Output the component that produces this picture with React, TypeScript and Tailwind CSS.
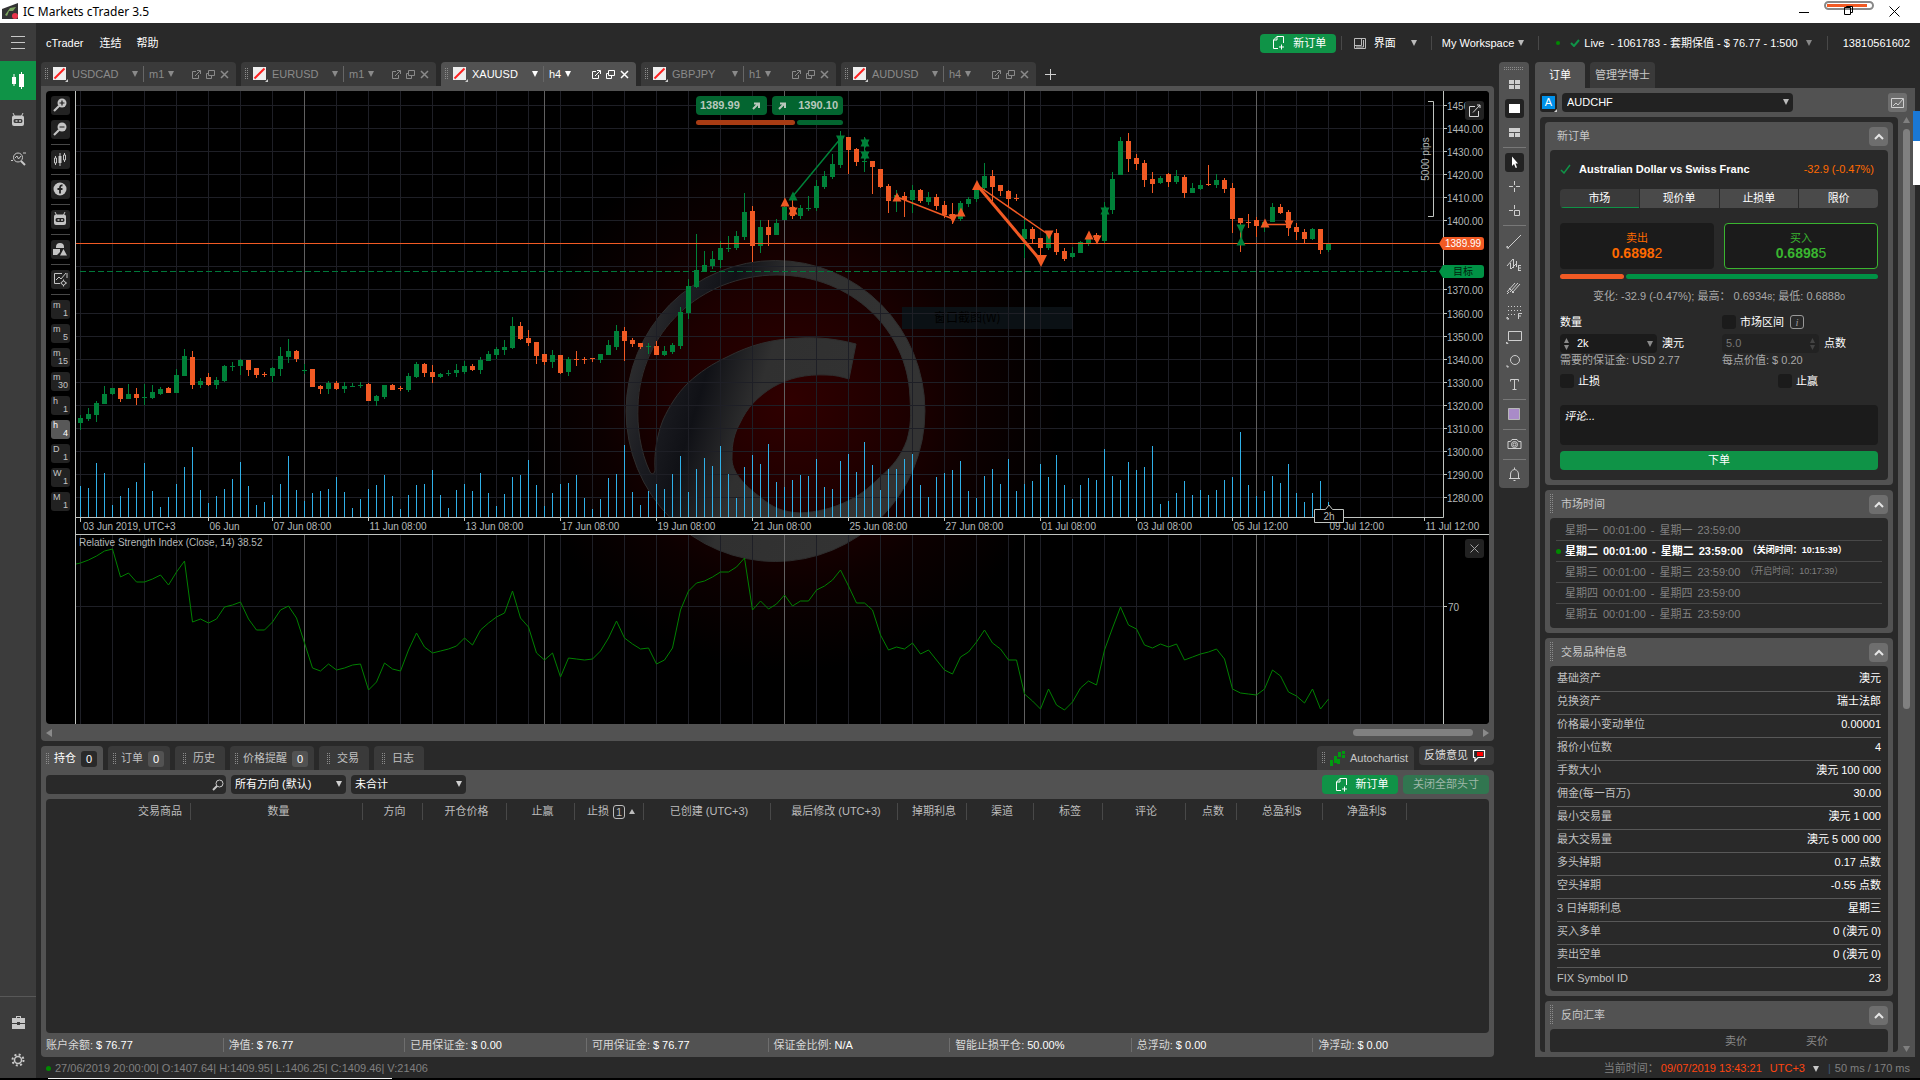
import React, { useState } from 'react';

type Candle = [number, number, number, number, 0 | 1];

// high, body top, body bottom, low, rising
const CANDLES: Candle[] = [
  [324, 327, 332, 339, 1], [317, 323, 328, 330, 1], [310, 312, 324, 331, 1], [295, 303, 313, 313, 1], [297, 297, 303, 304, 1],
  [297, 297, 308, 311, 0], [293, 303, 308, 308, 1], [297, 303, 307, 314, 0], [293, 306, 307, 314, 1], [294, 301, 307, 308, 1],
  [296, 298, 303, 304, 1], [296, 297, 302, 302, 0], [278, 284, 302, 302, 1], [258, 265, 285, 285, 1], [260, 266, 294, 298, 0],
  [287, 290, 294, 297, 1], [282, 286, 294, 295, 0], [286, 289, 294, 298, 1], [274, 275, 290, 291, 1], [271, 275, 276, 280, 1],
  [268, 269, 275, 284, 1], [269, 269, 279, 285, 0], [277, 277, 284, 287, 0], [281, 283, 284, 286, 0], [276, 277, 285, 291, 1],
  [256, 265, 278, 285, 1], [248, 260, 266, 272, 1], [259, 260, 268, 271, 0], [273, 279, 280, 283, 1], [278, 278, 296, 296, 0],
  [294, 295, 298, 303, 0], [290, 292, 298, 303, 1], [290, 292, 298, 299, 0], [291, 295, 298, 302, 1], [292, 295, 296, 296, 1],
  [291, 294, 295, 297, 1], [292, 293, 310, 310, 0], [304, 305, 310, 315, 1], [294, 294, 306, 308, 1], [293, 294, 299, 299, 0],
  [295, 297, 298, 300, 0], [282, 285, 299, 301, 1], [271, 273, 286, 287, 1], [272, 273, 282, 286, 0], [274, 281, 286, 292, 0],
  [282, 283, 286, 287, 1], [279, 282, 283, 285, 1], [273, 279, 282, 286, 1], [270, 275, 281, 283, 1], [273, 275, 279, 280, 0],
  [266, 269, 279, 283, 1], [260, 263, 270, 270, 1], [256, 258, 264, 268, 1], [249, 256, 259, 264, 1], [226, 235, 257, 258, 1],
  [231, 235, 248, 249, 0], [239, 247, 252, 255, 0], [251, 251, 265, 273, 0], [263, 263, 271, 274, 0], [259, 264, 271, 277, 1],
  [264, 264, 282, 283, 0], [266, 268, 281, 285, 1], [260, 268, 269, 275, 0], [266, 268, 269, 273, 0], [267, 267, 268, 271, 0],
  [263, 263, 269, 272, 1], [249, 254, 264, 264, 1], [234, 240, 256, 259, 1], [236, 240, 250, 270, 0], [247, 249, 253, 256, 0],
  [252, 252, 256, 258, 0], [252, 255, 256, 263, 1], [250, 255, 264, 264, 0], [255, 260, 264, 265, 1], [252, 254, 261, 263, 1],
  [216, 221, 255, 258, 1], [188, 195, 222, 228, 1], [143, 179, 196, 197, 1], [160, 174, 181, 181, 1], [160, 168, 175, 178, 1],
  [150, 157, 169, 177, 1], [145, 157, 158, 161, 1], [140, 145, 157, 159, 1], [102, 121, 146, 149, 1], [115, 120, 155, 171, 0],
  [129, 136, 155, 162, 1], [129, 136, 144, 155, 0], [128, 132, 144, 144, 1], [114, 116, 129, 129, 1], [109, 116, 125, 128, 0],
  [114, 117, 125, 128, 1], [105, 117, 118, 120, 1], [89, 95, 117, 120, 1], [80, 85, 96, 98, 1], [63, 73, 86, 88, 1],
  [40, 47, 74, 77, 1], [46, 46, 59, 83, 0], [57, 58, 71, 75, 0], [46, 70, 71, 81, 1], [70, 70, 76, 103, 0],
  [78, 78, 96, 97, 0], [93, 95, 110, 122, 0], [99, 104, 110, 121, 1], [101, 105, 109, 126, 0], [94, 99, 109, 122, 1],
  [98, 99, 110, 112, 0], [101, 106, 111, 114, 1], [103, 106, 115, 119, 0], [110, 114, 124, 127, 0], [112, 123, 125, 133, 0],
  [110, 112, 128, 130, 1], [106, 108, 113, 116, 1], [94, 96, 108, 111, 1], [72, 85, 97, 99, 1], [79, 85, 96, 110, 0],
  [94, 94, 100, 105, 0], [99, 100, 108, 116, 0], [103, 107, 108, 110, 0], [129, 138, 148, 167, 1], [136, 138, 148, 152, 0],
  [147, 147, 157, 167, 0], [142, 142, 157, 159, 1], [138, 142, 161, 164, 0], [157, 160, 168, 170, 0], [156, 162, 166, 167, 1],
  [150, 151, 162, 162, 1], [144, 148, 152, 155, 1], [142, 144, 149, 153, 0], [111, 123, 150, 152, 1], [81, 88, 119, 123, 1],
  [46, 50, 84, 84, 1], [42, 50, 68, 81, 0], [63, 67, 73, 79, 0], [69, 72, 89, 96, 0], [81, 88, 93, 102, 0],
  [85, 87, 92, 93, 1], [82, 83, 91, 96, 0], [79, 85, 91, 93, 1], [84, 86, 102, 107, 0], [92, 97, 102, 102, 1],
  [89, 94, 98, 99, 1], [74, 93, 94, 95, 0], [83, 89, 94, 97, 1], [87, 89, 98, 102, 0], [92, 97, 128, 142, 0],
  [127, 127, 132, 161, 0], [123, 131, 132, 137, 0], [126, 129, 135, 146, 0], [129, 131, 136, 141, 1], [112, 116, 131, 131, 1],
  [113, 116, 122, 123, 0], [119, 121, 137, 145, 0], [132, 136, 141, 149, 0], [138, 141, 148, 152, 0], [137, 138, 148, 149, 1],
  [138, 138, 159, 163, 0], [152, 153, 159, 161, 1],
];

const VOLUMES = [
  31, 29, 54, 44, 12, 21, 29, 35, 54, 26, 10, 20, 33, 50, 70, 27, 14, 21, 28, 38, 55, 31, 12, 15, 22, 33, 61, 27, 16, 24,
  26, 28, 40, 25, 9, 18, 28, 32, 42, 21, 8, 22, 32, 33, 47, 22, 9, 27, 33, 26, 44, 24, 11, 23, 40, 42, 57, 32, 11, 24,
  33, 34, 42, 19, 8, 18, 39, 43, 72, 25, 12, 26, 33, 28, 43, 61, 25, 48, 59, 51, 71, 43, 19, 50, 62, 53, 73, 35, 30, 37,
  42, 41, 58, 30, 28, 56, 63, 45, 75, 52, 27, 48, 48, 58, 63, 32, 20, 40, 44, 47, 56, 26, 19, 41, 48, 33, 58, 26, 33, 36,
  53, 40, 62, 32, 18, 32, 39, 37, 68, 41, 37, 55, 47, 50, 71, 13, 16, 24, 36, 22, 27, 22, 27, 37, 40, 85, 32, 21, 26, 41,
  34, 53, 24, 15, 24, 36, 15,
];

const RSI = [
  472, 469, 465, 460, 458, 486, 482, 491, 491, 488, 484, 494, 481, 470, 531, 528, 532, 528, 516, 514, 511, 528, 539, 539, 531,
  519, 515, 527, 552, 577, 580, 573, 579, 577, 574, 573, 599, 591, 572, 578, 580, 559, 542, 556, 562, 560, 558, 555, 547, 554,
  539, 532, 526, 522, 500, 527, 536, 562, 569, 562, 586, 567, 568, 569, 568, 560, 547, 530, 547, 553, 558, 557, 573, 569, 557,
  519, 500, 492, 490, 486, 481, 481, 476, 467, 519, 510, 518, 513, 504, 515, 510, 510, 499, 495, 489, 479, 495, 512, 512, 519,
  544, 559, 556, 558, 552, 563, 559, 569, 579, 583, 566, 561, 551, 539, 552, 558, 569, 569, 603, 610, 618, 598, 614, 619, 611,
  597, 590, 594, 559, 537, 516, 534, 538, 554, 557, 553, 556, 553, 569, 566, 563, 561, 558, 568, 598, 602, 603, 604, 598, 579,
  585, 601, 605, 612, 598, 618, 608,
];

const DATES: [number, string][] = [
  [16, '06 Jun'], [24, '07 Jun 08:00'], [36, '11 Jun 08:00'], [48, '13 Jun 08:00'], [60, '17 Jun 08:00'],
  [72, '19 Jun 08:00'], [84, '21 Jun 08:00'], [96, '25 Jun 08:00'], [108, '27 Jun 08:00'], [120, '01 Jul 08:00'],
  [132, '03 Jul 08:00'], [144, '05 Jul 12:00'], [156, '09 Jul 12:00'], [168, '11 Jul 12:00'],
];

// 1390 and 1380 sit under the price tags
const PRICES = Array.from({ length: 18 }, (_, k) => ({ k, price: 1450 - k * 10, covered: k === 6 || k === 7 }));

const GREEN = '#008139';
const ORANGE = '#f15a24';
const barX = (i: number) => 5.5 + i * 8;
const priceY = (k: number) => Math.round(14 + k * 23.06) + 0.5;

const Caret = ({ className = '' }: { className?: string }) => (
  <svg className={`pointer-events-none shrink-0 ${className}`} width="6" height="6" viewBox="0 0 6 6"><path d="M0 0h6L3 6z" fill="currentColor" /></svg>
);

const Grip = ({ className = 'h-4' }: { className?: string }) => (
  <svg className={`w-[3px] shrink-0 ${className}`} aria-hidden="true">
    <defs><pattern id="grip" width="2" height="2" patternUnits="userSpaceOnUse"><rect width="1" height="1" fill="#8c8c8c" /></pattern></defs>
    <rect width="100%" height="100%" fill="url(#grip)" />
  </svg>
);

const NewOrderIcon = () => (
  <svg width="12" height="14" viewBox="0 0 12 14" fill="none" stroke="currentColor"><path d="M5 12.500H.5V4L4 .5h6.500V7M4 .5V4H.5M8.500 8.500v5M6 11h5" /></svg>
);

const BotIcon = ({ size = 14 }: { size?: number }) => (
  <svg width={size} height={size} viewBox="0 0 14 14">
    <path d="M2 0l1.500 3M12 0l-1.500 3" stroke="currentColor" />
    <path fillRule="evenodd" fill="currentColor" d="M3 2.500h8q2 0 2 2V11q0 2-2 2H3q-2 0-2-2V4.500q0-2 2-2zM4 6q-1.500 0-1.500 2T4 10h6q1.500 0 1.500-2T10 6z" />
    <path d="M4.500 8h2M8 8h2" stroke="currentColor" strokeWidth="1.500" />
  </svg>
);

const CandlesIcon = () => (
  <svg width="14" height="14" viewBox="0 0 14 14" fill="none" stroke="currentColor"><path d="M2.500 4v2M2.500 11v2M1.500 6h2v5h-2zM11.500 1v2M11.500 8v2M10.500 3h2v5h-2z" /><path d="M7 1v13" /><path d="M7 4v7" strokeWidth="3" /></svg>
);

const magnifier = (sign: string) => (
  <svg width="14" height="14" viewBox="0 0 14 14"><circle cx="9" cy="5" r="4.500" fill="currentColor" /><path d="M6 8l-5 5" stroke="currentColor" strokeWidth="2.200" /><path d={sign} stroke="#1c1c1c" strokeWidth="1.200" /></svg>
);

const CHART_TOOLS: { label: string; icon: React.ReactNode; end?: boolean }[] = [
  { label: 'Zoom in', icon: magnifier('M6.500 5h5M9 2.500v5') },
  { label: 'Zoom out', icon: magnifier('M6.500 5h5'), end: true },
  { label: 'Chart type', icon: <CandlesIcon />, end: true },
  { label: 'Indicators', icon: <svg width="14" height="14" viewBox="0 0 14 14"><circle cx="7" cy="7" r="6.500" fill="currentColor" /><path d="M9.500 3.500Q7 3 7 6v5.500M4.500 7h5" fill="none" stroke="#222" strokeWidth="1.800" /></svg>, end: true },
  { label: 'cBots', icon: <BotIcon />, end: true },
  { label: 'Objects', icon: <svg width="14" height="14" viewBox="0 0 14 14" fill="currentColor"><path d="M3 5a4 4 0 018 0v1H3zM0 7h7v3l-3 3H0zM10.500 7l3.500 6.500H7z" /></svg>, end: true },
  { label: 'Chart settings', icon: <svg width="15" height="15" viewBox="0 0 15 15" fill="none" stroke="currentColor"><path d="M7 11.500H1.500V1.500H9M3 8l3-3 2 2 5-6M14 1v5" /><circle cx="10.500" cy="11" r="2" /><path d="M10.500 7.500v1.500M10.500 13v1.500M7.500 11h1M12.500 11h1.500" /></svg>, end: true },
];

const PERIODS = [['m', '1'], ['m', '5'], ['m', '15'], ['m', '30'], ['h', '1'], ['h', '4'], ['D', '1'], ['W', '1'], ['M', '1']];

const TABS = [['USDCAD', 'm1'], ['EURUSD', 'm1'], ['XAUUSD', 'h4'], ['GBPJPY', 'h1'], ['AUDUSD', 'h4']];

const ChartTab = ({ symbol, period, active }: { symbol: string; period: string; active: boolean }) => (
  <div className={`flex h-6 w-[195px] shrink-0 items-center rounded-t pl-1 pr-[7px] ${active ? 'bg-[#525252] text-white' : 'bg-[#3a3a3a] text-[#8a8a8a]'}`}>
    <Grip className="h-3" />
    <svg className="ml-[5px]" width="16" height="15" viewBox="0 0 16 15"><rect width="13" height="13" fill="#eee" /><path d="M1.500 11.500l10-10" stroke="#ff2020" strokeWidth="2" /><path d="M15 12v3h-3z" fill="#ccc" /></svg>
    <span className="ml-[3px] w-[60px] text-[11px]">{symbol}</span>
    <Caret />
    <span className="ml-[5px] border-l border-[#666] pl-[5px] text-[11px] leading-4">{period}</span>
    <Caret className="ml-1" />
    <button className="ml-auto" aria-label="Detach"><svg width="9" height="9" viewBox="0 0 9 9" fill="none" stroke="currentColor"><path d="M4 1.500H.5v7h6V5M3 6l5-5M5 .5h3.500V4" /></svg></button>
    <button className="ml-[5px]" aria-label="Restore"><svg width="9" height="9" viewBox="0 0 9 9" fill="none" stroke="currentColor"><path d="M2.500 .5h6v5h-6zM2.500 3.500h-2v5h5v-3" /></svg></button>
    <button className="ml-[5px]" aria-label="Close"><svg width="9" height="9" viewBox="0 0 9 9" stroke="currentColor" strokeWidth="1.500"><path d="M1 1l7 7M8 1L1 8" /></svg></button>
  </div>
);

const up = (x: number, y: number, c: string, s = 4.5) => <path key={`u${x}${y}`} d={`M${x - s} ${y + s}h${s * 2}L${x} ${y - s}z`} fill={c} />;
const down = (x: number, y: number, c: string, s = 4.5) => <path key={`d${x}${y}`} d={`M${x - s} ${y - s}h${s * 2}L${x} ${y + s}z`} fill={c} />;
const star = (x: number, y: number, c: string) => <g key={`s${x}${y}`}>{up(x, y - 1, c)}{down(x, y + 1, c)}</g>;

const PriceChart = () => (
  <svg className="block h-auto w-full" viewBox="0 0 1414 633">
    <defs>
      <radialGradient id="glow" gradientUnits="userSpaceOnUse" cx="715" cy="310" r="270">
        <stop offset="0" stopColor="#300000" /><stop offset="0.450" stopColor="#1c0000" /><stop offset="0.700" stopColor="#0c0000" /><stop offset="1" stopColor="#000" />
      </radialGradient>
      <linearGradient id="metal" x1="0" y1="0" x2="1" y2="0.300">
        <stop offset="0.050" stopColor="#343434" /><stop offset="0.220" stopColor="#1c1d22" /><stop offset="0.350" stopColor="#101116" /><stop offset="0.530" stopColor="#303030" /><stop offset="1" stopColor="#333" />
      </linearGradient>
    </defs>
    <rect width="1414" height="633" fill="#000" />
    <circle cx="715" cy="310" r="270" fill="url(#glow)" />
    <path
      fill="url(#metal)" stroke="#2e2e2e" strokeWidth="1" fillRule="evenodd"
      d="M700.500 169.500a149.500 150.500 0 010 301a149.500 150.500 0 010-301z M575 381C565 360 562 335 563 315C565 242 625 184 702 184C777 184 833 240 835 306C836 325 836 335 832 349C826 365 818 375 805 386C797 394 787 403 775 409C757 418 742 421 725 422C708 421 698 417 685 406C668 393 656 380 657 366C657 352 659 343 665 332C672 317 682 306 698 296C714 287 730 283 752 284C760 284 767 286 774 288L781 253C762 248 744 246 725 247C697 248 675 254 652 266C637 273 625 281 613 292C602 303 595 314 588 329C582 344 579 362 580 378C580 383 577 384 575 381z"
    />
    <rect x="827" y="216" width="170" height="22" fill="#0b1115" />
    <text x="859" y="231" fontSize="12" fill="#000" fontFamily='"Noto Sans CJK SC", sans-serif'>窗口截图(W)</text>
    <g stroke="#1e1f26">
      {PRICES.map(({ k }) => <path key={k} d={`M1 ${priceY(k)}H1368`} />)}
      {Array.from({ length: 43 }, (_, k) => <path key={k} d={`M${barX(k * 4)} 0V426M${barX(k * 4)} 444V633`} />)}
      <path d="M1 515.500H1368" />
    </g>
    <path d="M229.500 0V633M469.500 0V633M709.500 0V633M949.500 0V633M1181.500 0V633" stroke="#606060" />
    {VOLUMES.map((v, i) => <path key={i} d={`M${barX(i)} 426v-${v}`} stroke="#2fb0e8" />)}
    <path d="M5 180.500H1364" stroke="#00783a" strokeDasharray="6 3" />
    {CANDLES.map(([h, t, b, l, rise], i) => (
      <g key={i} fill={rise ? GREEN : ORANGE}>
        <rect x={barX(i) - 0.5} y={h} width="1" height={l - h} />
        <rect x={barX(i) - 2.5} y={t} width="5" height={b - t} />
      </g>
    ))}
    <path d="M1 152.500H1366" stroke={ORANGE} />
    <g fill="none">
      <path d="M718 105L766 47M1166.500 137v14" stroke={GREEN} strokeWidth="1.500" />
      <path d="M822 106L878 128M902 94L974 144M1190 133.500H1214" stroke={ORANGE} strokeWidth="1.500" />
      <path d="M902 94L966 170" stroke={ORANGE} strokeWidth="3" />
    </g>
    {[up(718, 105, GREEN), down(765.5, 49, GREEN), up(710, 111, ORANGE), star(718, 120, ORANGE), star(790, 52, GREEN), star(790, 64, GREEN),
      up(822, 106, ORANGE), down(878, 128, ORANGE), up(886, 121, ORANGE), up(902, 94, ORANGE, 5), down(966, 170, ORANGE, 6), down(974, 144, ORANGE),
      up(1014, 144, ORANGE), down(1022, 149, ORANGE), star(1030, 120, GREEN), down(1166, 138, GREEN), up(1166, 150, GREEN), up(1190, 132, ORANGE), down(1214, 134, ORANGE)]}

    {/* axes */}
    <rect y="427" width="1414" height="16" fill="#000" />
    <path d="M.5 0V443M0 426.500H1368.500V0M0 443.500H1414M.5 444V633M1368.500 444V633M1368 515.500h4" stroke="#c0c4c0" fill="none" />
    <g fill="#b4b8b8" fontSize="10">
      {PRICES.map(({ k, price, covered }) => (
        <g key={k}><path d={`M1368 ${priceY(k)}h4`} stroke="#c0c4c0" />{!covered && <text x="1372" y={priceY(k) + 4.5}>{price}.00</text>}</g>
      ))}
      <path d="M5.500 427v4" stroke="#c0c4c0" />
      <text x="8" y="439">03 Jun 2019, UTC+3</text>
      {DATES.map(([i, label]) => (
        <g key={label}><path d={`M${barX(i)} 427v3`} stroke="#c0c4c0" /><text x={barX(i) + 1} y="439">{label}</text></g>
      ))}
      <text x="4" y="455">Relative Strength Index (Close, 14) 38.52</text>
      <text x="1373" y="520">70</text>
      <text x="0" y="0" textAnchor="middle" transform="translate(1354 68) rotate(-90)">5000 pips</text>
    </g>
    <path d="M1353 10.500h5.500v115H1353" stroke="#c0c4c0" fill="none" />
    <path d={`M1 473L${RSI.map((y, i) => `${barX(i)} ${y}`).join('L')}`} fill="none" stroke="#008000" />
    <path d="M1364 152.500l4-6.500h38q3 0 3 3v7q0 3-3 3h-38z" fill={ORANGE} />
    <text x="1370" y="156" fontSize="10" fill="#fff">1389.99</text>
    <path d="M1364 180.500l4-6.500h38q3 0 3 3v7q0 3-3 3h-38z" fill="#009245" />
    <text x="1378" y="184" fontSize="10" fill="#00200c" fontFamily='"Noto Sans CJK SC", sans-serif'>目标</text>
    <path d="M1239.500 418.500h11l3.500-4.500 3.500 4.500h11v13h-29z" fill="#000" stroke="#c0c4c0" />
    <text x="1254" y="429" textAnchor="middle" fontSize="10" fill="#b4b8b8">2h</text>
  </svg>
);

const I = ({ children }: { children: React.ReactNode }) => (
  <svg width="17" height="17" viewBox="0 0 17 17" fill="none" stroke="currentColor">{children}</svg>
);

const DRAW_TOOLS: { label: string; icon: React.ReactNode; active?: boolean; end?: boolean }[] = [
  { label: 'Multi-chart', icon: <I><path stroke="none" fill="currentColor" d="M3 4h5v4H3zM9 4h5v4H9zM3 9h5v4H3zM9 9h5v4H9z" /></I> },
  { label: 'Single-chart', active: true, icon: <I><path stroke="none" fill="#fff" d="M3 4h11v9H3z" /></I> },
  { label: 'Free-chart', icon: <I><path stroke="none" fill="currentColor" d="M3 4h11v4H3zM3 9h5v4H3zM9 9h5v4H9z" /></I>, end: true },
  { label: 'Cursor', active: true, icon: <I><path stroke="none" fill="#fff" d="M6 2.500v9.500l2-2 1.700 4 1.300-.6L9.500 9.500H12z" /></I> },
  { label: 'Crosshair', icon: <I><path d="M8.500 3v4M8.500 10v4M3 8.500h4M10 8.500h4" /></I> },
  { label: 'Marker', icon: <I><path d="M8.500 3v4M3 8.500h4M8.500 8.500h5v5h-5z" /></I>, end: true },
  { label: 'Line', icon: <I><path d="M3 15L15 3M1 14v2h2z" /></I> },
  { label: 'Elliott', icon: <I><path d="M1 10l6-7M4.500 7v6M7.500 3v9M10.500 5v6M5 13l5-5M12 9.500h3M12 12h3M12 14.500h3M12.500 9v5" /></I> },
  { label: 'Pitchfork', icon: <I><path d="M1 12l8-9M4 12l8-9M6 13l8-9M3 8l5 5M1 14l2-2" /></I> },
  { label: 'Fibonacci', icon: <I><path d="M2 2.500h14M2 6.500h14M2 10.500h8" strokeDasharray="1 2" /><path d="M12.500 15V9.500H16M12.500 12H15M1 13v2h2z" /></I> },
  { label: 'Rectangle', icon: <I><path d="M2.500 3.500h13v9h-13zM.5 14v1.500H2z" /></I> },
  { label: 'Ellipse', icon: <I><circle cx="9" cy="8" r="4.500" /><path d="M1 13.500V15h1.500z" /></I> },
  { label: 'Text', icon: <I><path d="M4.500 5.500v-2h8v2M8.500 3.500v10M6.500 13.500h4" /></I>, end: true },
  { label: 'Colour', icon: <I><path fill="#a98bc8" stroke="#b8b8b8" d="M2.500 2.500h11v11h-11z" /></I>, end: true },
  { label: 'Snapshot', icon: <I><path d="M2 5.500h2.500L6 3.500h5l1.500 2H15v7H2z" /><circle cx="8.500" cy="8.500" r="3" /><circle cx="8.500" cy="8.500" r="1.500" /></I>, end: true },
  { label: 'Alerts', icon: <I><path d="M3 12.500h11M4.500 12V9c0-3 1-5 4-5.500 3 .5 4 2.500 4 5.500v3M8.500 1.500v2M7.500 14.500h2" /></I> },
];

const Section = ({ title, grip = true, children }: { title: string; grip?: boolean; children: React.ReactNode }) => (
  <section className="shrink-0 rounded bg-[#525252] px-[5px] pb-[5px]">
    <header className="flex h-7 items-center">
      {grip ? <Grip className="mr-2 h-5" /> : <span className="w-[7px]" />}
      <h2 className="flex-1 text-[11px] text-[#c8c8c8]">{title}</h2>
      <button className="flex h-[19px] w-[19px] items-center justify-center rounded bg-[#6e6e6e] text-[#e6e6e6]" aria-label={`收起 ${title}`}>
        <svg width="10" height="7" viewBox="0 0 10 7" fill="none" stroke="currentColor" strokeWidth="2"><path d="M1 6l4-4 4 4" /></svg>
      </button>
    </header>
    <div className="rounded bg-[#292929]">{children}</div>
  </section>
);

const HOURS: [string, string?][] = [['星期一'], ['星期二', '（关闭时间：10:15:39）'], ['星期三', '（开启时间：10:17:39）'], ['星期四'], ['星期五']];

const INFO = [
  ['基础资产', '澳元'], ['兑换资产', '瑞士法郎'], ['价格最小变动单位', '0.00001'], ['报价小位数', '4'], ['手数大小', '澳元 100 000'],
  ['佣金(每一百万)', '30.00'], ['最小交易量', '澳元 1 000'], ['最大交易量', '澳元 5 000 000'], ['多头掉期', '0.17 点数'], ['空头掉期', '-0.55 点数'],
  ['3 日掉期利息', '星期三'], ['买入多单', '0 (澳元 0)'], ['卖出空单', '0 (澳元 0)'], ['FIX Symbol ID', '23'],
];

const checkbox = 'h-[14px] w-[14px] shrink-0 appearance-none rounded-[3px] bg-[#1b1b1b] checked:bg-[#0f9347]';

const Steppers = () => (
  <svg width="5" height="12" viewBox="0 0 5 12" fill="currentColor"><path d="M0 5h5L2.500 0zM0 7h5L2.500 12z" /></svg>
);

const OrderForm = () => {
  const [kind, setKind] = useState('市场');
  return (
    <div className="px-[10px] pb-[10px] pt-3 text-white">
      <div className="flex h-[14px] items-center">
        <svg width="11" height="10" viewBox="0 0 11 10" fill="none" stroke="#0f9347" strokeWidth="1.500"><path d="M1 6l3 3 6-8" /></svg>
        <b className="ml-2 flex-1 text-[11px]">Australian Dollar vs Swiss Franc</b>
        <span className="mr-1 text-[11px] text-[#ff6a00]">-32.9 (-0.47%)</span>
      </div>
      <div className="mt-[13px] grid grid-cols-4 gap-px overflow-hidden rounded">
        {['市场', '现价单', '止损单', '限价'].map((k) => (
          <button key={k} onClick={() => setKind(k)} className={`h-[19px] text-[11px] leading-[17px] ${kind === k ? 'border-b border-[#0f9347] bg-[#3a3a3a]' : 'bg-[#4a4a4a]'}`}>{k}</button>
        ))}
      </div>
      <div className="mt-[15px] grid grid-cols-2 gap-[10px]">
        <button className="h-[46px] rounded bg-[#1b1b1b] text-[#ff6a00]">
          <span className="block text-[11px] leading-[14px]">卖出</span>
          <span className="block text-[14px] leading-4"><b>0.6898</b>2</span>
        </button>
        <button className="h-[46px] rounded border border-[#3ab530] bg-[#1b1b1b] text-[#3ab530]">
          <span className="block text-[11px] leading-[14px]">买入</span>
          <span className="block text-[14px] leading-4"><b>0.6898</b>5</span>
        </button>
      </div>
      <div className="mt-[5px] flex h-[5px] gap-[2px]">
        <span className="w-1/5 rounded bg-[#f15a24]" />
        <span className="flex-1 rounded bg-[#009245]" />
      </div>
      <p className="mt-[9px] text-center text-[11px] leading-4 text-[#a8a8a8]">变化: -32.9 (-0.47%); 最高： 0.6934<small className="text-[9px]">8</small>; 最低: 0.6888<small className="text-[9px]">0</small></p>
      <div className="mt-[7px] grid grid-cols-[162px_1fr] text-[11px]">
        <label htmlFor="amount" className="flex h-[22px] items-center pb-[2px]">数量</label>
        <div className="flex h-[22px] items-center gap-1 pb-[2px]">
          <label className="flex items-center gap-1"><input type="checkbox" className={checkbox} />市场区间</label>
          <span className="ml-[2px] flex h-[14px] w-[14px] items-center justify-center rounded-[3px] border border-[#999] font-['Liberation_Serif',serif] italic text-[#999]">i</span>
        </div>
        <div className="flex h-[19px] items-center gap-[5px]">
          <span className="flex h-[19px] w-[97px] items-center rounded bg-[#1b1b1b] px-1 text-[#8a8a8a]">
            <Steppers />
            <input id="amount" defaultValue="2k" className="ml-2 w-0 flex-1 bg-transparent text-white" />
            <Caret />
          </span>
          澳元
        </div>
        <div className="flex h-[19px] items-center gap-[5px]">
          <span className="flex h-[19px] w-[97px] items-center rounded bg-[#222] px-1 text-[#444]">
            <input aria-label="市场区间点数" defaultValue="5.0" className="w-0 flex-1 bg-transparent text-[#777]" />
            <Steppers />
          </span>
          点数
        </div>
        <span className="leading-[14px] text-[#a8a8a8]">需要的保证金: USD 2.77</span>
        <span className="leading-[14px] text-[#a8a8a8]">每点价值: $ 0.20</span>
      </div>
      <div className="mt-[7px] grid grid-cols-[218px_1fr] text-[11px] leading-[14px]">
        <label className="flex items-center gap-1"><input type="checkbox" className={checkbox} />止损</label>
        <label className="flex items-center gap-1"><input type="checkbox" className={checkbox} />止赢</label>
      </div>
      <textarea aria-label="评论" placeholder="评论..." className="mt-[17px] block h-10 w-full resize-none rounded bg-[#1b1b1b] px-1 py-1 text-[11px] italic leading-[14px] placeholder:text-white" />
      <button className="mt-[6px] block h-[19px] w-full rounded bg-[#0f9347] text-[11px]">下单</button>
    </div>
  );
};

const COLUMNS: [string, string][] = [
  ['交易商品', 'w-[60px]'], ['数量', 'w-[172px]'], ['方向', 'w-[60px]'], ['开仓价格', 'w-[84px]'], ['止赢', 'w-[68px]'], ['止损', 'w-[69px]'],
  ['已创建 (UTC+3)', 'w-[127px]'], ['最后修改 (UTC+3)', 'w-[127px]'], ['掉期利息', 'w-[69px]'], ['渠道', 'w-[67px]'], ['标签', 'w-[69px]'],
  ['评论', 'w-[83px]'], ['点数', 'w-[51px]'], ['总盈利$', 'w-[86px]'], ['净盈利$', 'w-[84px]'],
];

const BOTTOM_TABS: [string, number?][] = [['持仓', 0], ['订单', 0], ['历史'], ['价格提醒', 0], ['交易'], ['日志']];

const ACCOUNT = [
  ['账户余额', '$ 76.77'], ['净值', '$ 76.77'], ['已用保证金', '$ 0.00'], ['可用保证金', '$ 76.77'],
  ['保证金比例', 'N/A'], ['智能止损平仓', '50.00%'], ['总浮动', '$ 0.00'], ['净浮动', '$ 0.00'],
];

const Positions = () => (
  <div className="flex min-h-0 flex-1 flex-col">
    <div className="flex h-6 items-end gap-[5px] text-[11px]">
      {BOTTOM_TABS.map(([name, count], i) => (
        <button key={name} className={`flex h-6 items-center rounded-t pt-px ${count === undefined ? 'w-[50px] gap-[7px] pl-2' : 'gap-[5px] pl-[5px] pr-[6px]'} ${i === 0 ? 'bg-[#525252] text-white' : 'bg-[#3a3a3a] text-[#c0c0c0]'}`}>
          <Grip className="h-3" />
          <span>{name}</span>
          {count !== undefined && <span className={`h-4 w-4 rounded-[3px] text-center leading-4 text-white ${i === 0 ? 'bg-[#292929]' : 'bg-[#525252]'}`}>{count}</span>}
        </button>
      ))}
      <button className="ml-auto flex h-6 w-[97px] items-center rounded-t bg-[#3a3a3a] pl-[5px] text-[#c8c8c8]">
        <Grip className="h-3" />
        <svg className="ml-1 mr-1" width="17" height="15" viewBox="0 0 17 15" fill="#009a10"><path d="M1 9h3v6H1zM5 5h3v7H5zM8 8h3v5H8zM9 1h3v5H9zM13 0h3v3h-3zM13 4h3v3h-3z" /></svg>
        Autochartist
      </button>
      <button className="flex h-[19px] w-[75px] items-center gap-1 self-start rounded bg-[#3a3a3a] pl-[5px] text-[#e0e0e0]">
        反馈意见
        <svg width="14" height="13" viewBox="0 0 14 13"><path d="M1.500 1.500h11v7H6l-3 3.500V8.500H1.500z" fill="#292929" stroke="#fff" strokeWidth="1.200" /><path d="M5 3h6v4H5z" fill="#f00" /></svg>
      </button>
    </div>
    <div className="flex min-h-0 flex-1 flex-col rounded-b rounded-tr bg-[#525252] px-[5px] pt-[5px]">
      <div className="mb-[5px] flex gap-[5px] text-[11px]">
        <div className="relative w-[180px]">
          <input aria-label="搜索" className="h-[19px] w-full rounded bg-[#292929] px-2 text-white" />
          <svg className="absolute right-[2px] top-1" width="12" height="12" viewBox="0 0 12 12" fill="none" stroke="#c8c8c8"><circle cx="7.500" cy="4.500" r="3.500" /><path d="M5 7l-4 4" strokeWidth="2" /></svg>
        </div>
        {['所有方向 (默认)', '未合计'].map((o) => (
          <div key={o} className="relative w-[115px]">
            <select aria-label={o} className="h-[19px] w-full appearance-none rounded bg-[#292929] px-1 text-white"><option>{o}</option></select>
            <Caret className="absolute right-1 top-[6px] text-[#d0d0d0]" />
          </div>
        ))}
        <button className="ml-auto flex h-[19px] w-[76px] items-center justify-center gap-2 rounded bg-[#0f9347] pl-1 text-white"><NewOrderIcon />新订单</button>
        <button className="h-[19px] w-[86px] rounded bg-[#317650] text-[#9fb8aa]">关闭全部头寸</button>
      </div>
      <div className="min-h-0 flex-1 overflow-hidden rounded bg-[#292929]">
        <table className="table-fixed border-collapse text-[11px] text-[#bcbcbc]">
          <thead>
            <tr>
              <th className="w-[85px]" />
              {COLUMNS.map(([name, w]) => (
                <th key={name} className={`p-0 pt-1 font-normal ${w}`}>
                  <div className={`flex h-[17px] items-center whitespace-nowrap border-r border-[#484848] ${name === '交易商品' ? 'justify-end pr-2' : 'justify-center pl-1'}`}>
                    {name}
                    {name === '止损' && <><span className="ml-1 h-[14px] rounded-[3px] border border-[#bcbcbc] px-[2px] leading-3">1</span><svg className="ml-1" width="6" height="5" viewBox="0 0 6 5" fill="currentColor"><path d="M0 5h6L3 0z" /></svg></>}
                  </div>
                </th>
              ))}
            </tr>
          </thead>
        </table>
      </div>
      <dl className="-mx-[5px] grid h-6 grid-cols-8 items-center text-[11px]">
        {ACCOUNT.map(([k, v], i) => (
          <div key={k} className={`flex h-[14px] items-center gap-[3px] pl-[5px] text-[#d8d8d8] ${i ? 'border-l border-[#6e6e6e]' : ''}`}>
            <dt>{k}:</dt><dd className="text-white">{v}</dd>
          </div>
        ))}
      </dl>
    </div>
  </div>
);

const App: React.FC = () => (
  <div className="relative flex h-screen flex-col overflow-hidden bg-[#292929] font-['Liberation_Sans','Noto_Sans_CJK_SC',sans-serif]">
    <header className="flex h-[23px] shrink-0 items-center bg-white pl-[2px] text-black">
      <svg width="17" height="17" viewBox="0 0 17 17"><path d="M0 6L16 0v16H0z" fill="#333" /><path d="M3 12l5-7 6-1-3 4H7l-2 5z" fill="#7fa860" /><circle cx="13" cy="13" r="3" fill="#e8334a" /></svg>
      <h1 className="ml-1 flex-1 font-['Noto_Sans',sans-serif] text-[12px]">IC Markets cTrader 3.5</h1>
      <button className="mr-[15px]" aria-label="Minimize"><svg width="10" height="14"><path d="M0 7.500h10" stroke="#000" /></svg></button>
      <button className="mr-[15px] self-start" aria-label="Restore">
        <svg width="50" height="16" viewBox="0 0 50 16"><rect x="1" y="2" width="48" height="7" rx="3.500" fill="#fff" stroke="#888" strokeWidth="2" /><rect x="3" y="4" width="40" height="3" fill="#f15a24" /><path d="M20.500 7.500h6v7h-6zM22.500 7V6.500h6v6H27" fill="none" stroke="#000" /></svg>
      </button>
      <button className="mr-5" aria-label="Close"><svg width="11" height="11" viewBox="0 0 11 11" stroke="#000"><path d="M.5 .5l10 10M10.500 .5l-10 10" /></svg></button>
    </header>

    <div className="flex min-h-0 flex-1">
      <nav className="flex w-9 shrink-0 flex-col items-center bg-[#3c3c3c] text-[#c8c8c8]">
        <button className="flex h-[38px] w-full items-center justify-center" aria-label="Menu"><svg width="14" height="13" viewBox="0 0 14 13" stroke="currentColor"><path d="M0 .5h14M0 6.500h14M0 12.500h14" /></svg></button>
        <button className="flex h-[39px] w-full items-center justify-center bg-[#0f9347] text-white" aria-label="Trade"><svg width="14" height="17" viewBox="0 0 14 17" fill="currentColor"><path d="M1 5h4v7H1zM2.500 2h1v12h-1zM8 2h5v13H8zM10 0h1v17h-1z" /></svg></button>
        <button className="flex h-[39px] w-full items-center justify-center" aria-label="Automate"><BotIcon size={14} /></button>
        <button className="flex h-[39px] w-full items-center justify-center" aria-label="Analyze"><svg width="15" height="14" viewBox="0 0 15 14" fill="none" stroke="currentColor"><circle cx="7" cy="5.500" r="4.500" /><path d="M4 6l2-2 1.500 3L10 4M12 1h3M0 8.500h2" /><path d="M10 9l4 4" strokeWidth="2" /></svg></button>
        <div className="mt-auto w-full border-t border-[#585858]">
          <button className="mt-[6px] flex h-[39px] w-full items-center justify-center" aria-label="Portfolio"><svg width="13" height="13" viewBox="0 0 13 13" fill="currentColor"><path d="M4 2V0h5v2h4v5H8V6H5v1H0V2zM5 1v1h3V1zM0 8h5v1h3V8h5v5H0z" fillRule="evenodd" /></svg></button>
          <button className="flex h-9 w-full items-center justify-center" aria-label="Settings"><svg width="14" height="14" viewBox="0 0 14 14" fill="none" stroke="currentColor"><circle cx="7" cy="7" r="3.500" strokeWidth="1.500" /><circle cx="7" cy="7" r="5.500" strokeWidth="2" strokeDasharray="2 2.320" /></svg></button>
        </div>
      </nav>

      <div className="flex min-w-0 flex-1 flex-col">
        <div className="flex h-[39px] shrink-0 items-center pl-[10px] pr-[10px] pt-px text-[11px] text-white">
          <button>cTrader</button>
          <button className="ml-4">连结</button>
          <button className="ml-[15px]">帮助</button>
          <button className="ml-auto flex h-[19px] w-[76px] items-center justify-center gap-2 rounded bg-[#0f9347] pl-1"><NewOrderIcon />新订单</button>
          <button className="ml-[5px] flex h-[14px] items-center border-l border-[#484848] pl-3">
            <svg width="12" height="11" viewBox="0 0 12 11" fill="none" stroke="#bbb"><path d="M.5 .5h11v10H.5zM7.500 .5v7H.5M9.500 2v7H2" /></svg>
            <span className="ml-2">界面</span>
            <Caret className="ml-[15px] mr-[14px] text-[#bbb]" />
          </button>
          <button className="flex h-[14px] items-center border-l border-[#484848] pl-[10px]">My Workspace<Caret className="ml-1 mr-[14px] text-[#bbb]" /></button>
          <button className="flex h-[14px] items-center border-l border-[#484848] pl-[17px]">
            <span className="h-1 w-1 rounded-full bg-[#008a00]" />
            <svg className="ml-[10px] mr-1" width="10" height="8" viewBox="0 0 10 8" fill="none" stroke="#0f9347" strokeWidth="2"><path d="M1 4l3 3 5-6" /></svg>
            Live&nbsp; - 1061783 - 套期保值 - $ 76.77 - 1:500
            <Caret className="ml-2 mr-[15px] text-[#888]" />
          </button>
          <span className="border-l border-[#484848] pl-[15px] leading-[14px]">13810561602</span>
        </div>

        <div className="flex min-h-0 flex-1 pl-[5px] pr-[5px]">
          <main className="flex min-w-0 flex-1 flex-col">
            <div className="flex gap-[5px]">
              {TABS.map(([symbol, period]) => <ChartTab key={symbol} symbol={symbol} period={period} active={symbol === 'XAUUSD'} />)}
              <button className="ml-1 text-[#d0d0d0]" aria-label="Add chart"><svg width="11" height="11" viewBox="0 0 11 11" stroke="currentColor"><path d="M5.500 0v11M0 5.500h11" /></svg></button>
            </div>
            <div className="mb-[5px] rounded-b rounded-tr bg-[#525252] px-[5px] pt-[5px]">
              <div className="relative flex overflow-hidden rounded bg-black">
                <div className="flex w-[29px] shrink-0 flex-col gap-[5px] px-[5px] pt-[5px] text-[#c4c4c4]">
                  {CHART_TOOLS.map(({ label, icon, end }) => (
                    <React.Fragment key={label}>
                      <button aria-label={label} className="flex h-[19px] w-[19px] items-center justify-center rounded-[3px] bg-[#222] pb-px pr-px">{icon}</button>
                      {end && <hr className="h-px border-0 bg-[#484848]" />}
                    </React.Fragment>
                  ))}
                  {PERIODS.map(([unit, n]) => (
                    <button key={unit + n} className={`flex h-[19px] w-[19px] justify-between rounded-[3px] px-[2px] pb-px text-[9px] leading-[10px] ${unit + n === 'h4' ? 'bg-[#585858] text-white' : 'bg-[#222]'}`}>
                      <span className="w-0">{unit}</span><span className="self-end">{n}</span>
                    </button>
                  ))}
                </div>
                <div className="min-w-0 flex-1"><PriceChart /></div>
                <div className="absolute left-[650px] top-[5px] w-[147px] text-[11px] font-bold text-[#b8c8bc]">
                  <div className="flex gap-[5px]">
                    <button className="flex h-[19px] flex-1 items-center justify-between rounded bg-[#036530] pl-1 pr-[7px]">1389.99<svg width="8" height="8" viewBox="0 0 8 8" fill="none" stroke="currentColor" strokeWidth="2"><path d="M1 7l5-5M2 1.500h5V6" /></svg></button>
                    <button className="flex h-[19px] flex-1 items-center justify-between rounded bg-[#036530] pl-[6px] pr-[5px]"><svg width="8" height="8" viewBox="0 0 8 8" fill="none" stroke="currentColor" strokeWidth="2"><path d="M1 7l5-5M2 1.500h5V6" /></svg>1390.10</button>
                  </div>
                  <div className="mt-[5px] flex h-[5px] gap-[2px]"><span className="w-[99px] rounded bg-[#a83c14]" /><span className="flex-1 rounded bg-[#036530]" /></div>
                </div>
                <button aria-label="Detach chart" className="absolute right-[5px] top-[10px] flex h-[19px] w-[19px] items-center justify-center rounded-[3px] bg-[#222] text-[#d8d8d8]"><svg width="13" height="13" viewBox="0 0 13 13" fill="none" stroke="currentColor"><path d="M7 2.500H1.500v10h9V7M5 8.500L12 1M9 1h3v3" /></svg></button>
                <button aria-label="Remove indicator" className="absolute bottom-[166px] right-[5px] flex h-[19px] w-[19px] items-center justify-center rounded-[3px] bg-[#222] text-[#a0a0a0]"><svg width="9" height="9" viewBox="0 0 9 9" stroke="currentColor"><path d="M.5 .5l8 8M8.500 .5l-8 8" /></svg></button>
              </div>
              <div className="flex h-[17px] items-center justify-between text-[#8a8a8a]">
                <svg width="6" height="8" viewBox="0 0 6 8" fill="currentColor"><path d="M6 0v8L0 4z" /></svg>
                <span className="ml-auto mr-[10px] h-[7px] w-[120px] rounded bg-[#808080]" />
                <svg width="6" height="8" viewBox="0 0 6 8" fill="currentColor"><path d="M0 0v8l6-4z" /></svg>
              </div>
            </div>
            <Positions />
          </main>

          <div className="ml-[5px] flex w-[30px] shrink-0 flex-col items-center gap-[5px] self-start rounded bg-[#525252] pb-1 pt-[5px] text-[#cfcfcf]">
            <svg width="20" height="3"><rect width="20" height="3" fill="url(#grip)" /></svg>
            {DRAW_TOOLS.map(({ label, icon, active, end }) => (
              <React.Fragment key={label}>
                <button aria-label={label} className={`flex h-[19px] w-[19px] items-center justify-center rounded-[3px] ${active ? 'bg-[#222]' : ''}`}>{icon}</button>
                {end && <hr className="h-px w-[23px] border-0 bg-[#787878]" />}
              </React.Fragment>
            ))}
          </div>

          <aside className="ml-[6px] flex w-[380px] shrink-0 flex-col">
            <div className="flex gap-[5px] text-[11px]">
              <button className="h-[26px] w-[50px] rounded-t bg-[#525252] text-white">订单</button>
              <button className="h-[26px] w-[65px] rounded-t bg-[#3a3a3a] text-[#c8c8c8]">管理学博士</button>
            </div>
            <div className="flex min-h-0 flex-1 flex-col bg-[#525252] pb-[5px] pl-[5px]">
              <div className="flex h-[29px] items-center">
                <span className="relative flex h-[19px] w-[17px] items-center justify-center rounded-[3px] bg-[#222] text-[11px] text-white">
                  <span className="h-[13px] w-[13px] bg-[#0091ea] text-center leading-[13px]">A</span>
                  <svg className="absolute bottom-0 right-0" width="3" height="3"><path d="M3 0v3H0z" fill="#ccc" /></svg>
                </span>
                <div className="relative ml-[5px] w-[231px]">
                  <select aria-label="Symbol" className="block h-[19px] w-full appearance-none rounded bg-[#222] px-[5px] text-[11px] text-white"><option>AUDCHF</option></select>
                  <Caret className="absolute right-1 top-[6px] text-[#bbb]" />
                </div>
                <button aria-label="Open chart" className="ml-auto mr-2 flex h-[19px] w-[19px] items-center justify-center rounded-[3px] bg-[#6e6e6e] text-[#d0d0d0]"><svg width="13" height="10" viewBox="0 0 13 10" fill="none" stroke="currentColor"><path d="M.5 .5h12v9H.5zM2 8l3-3 2 2 5-6" /></svg></button>
              </div>
              <div className="flex min-h-0 flex-1">
                <div className="flex w-[358px] flex-col gap-[5px] overflow-hidden rounded bg-[#292929] px-[5px] pt-[5px]">
                  <Section title="新订单" grip={false}><OrderForm /></Section>
                  <Section title="市场时间">
                    <ul className="pb-[3px] pl-[6px] pr-[6px] pt-[2px] text-[11px]">
                      {HOURS.map(([day, note], i) => (
                        <li key={day} className={`relative flex h-[21px] items-center gap-[5px] pl-[9px] ${i < 4 ? 'border-b border-[#484848]' : ''} ${i === 1 ? 'text-white font-bold' : 'text-[#808080]'}`}>
                          {i === 1 && <span className="absolute left-0 h-[5px] w-[5px] rounded-full bg-[#008a00]" />}
                          <span>{day}</span><span>00:01:00</span><span>-</span><span>{day}</span><span>23:59:00</span>
                          {note && <span className="text-[9px]">{note}</span>}
                        </li>
                      ))}
                    </ul>
                  </Section>
                  <Section title="交易品种信息">
                    <div className="px-[7px] pb-px pt-[2px]">
                      <table className="w-full border-collapse text-[11px]">
                        <tbody>
                          {INFO.map(([k, v], i) => (
                            <tr key={k} className={i < INFO.length - 1 ? 'border-b border-[#585858]' : ''}>
                              <th className="h-[23px] p-0 pb-[2px] text-left font-normal text-[#c0c0c0]">{k}</th>
                              <td className="p-0 pb-[2px] text-right text-white">{v}</td>
                            </tr>
                          ))}
                        </tbody>
                      </table>
                    </div>
                  </Section>
                  <Section title="反向汇率">
                    <div className="grid grid-cols-[175px_81px_1fr] text-[11px] leading-6 text-[#8a8a8a]"><span /><span>卖价</span><span>买价</span></div>
                  </Section>
                </div>
                <div className="ml-[5px] flex w-[7px] flex-col items-center text-[#808080]">
                  <svg width="7" height="6" viewBox="0 0 7 6" fill="currentColor"><path d="M0 6h7L3.500 0z" /></svg>
                  <span className="mt-[6px] h-[580px] w-[7px] rounded bg-[#808080]" />
                  <svg className="mt-auto" width="7" height="6" viewBox="0 0 7 6" fill="currentColor"><path d="M0 0h7L3.500 6z" /></svg>
                </div>
              </div>
            </div>
          </aside>
        </div>

        <footer className="flex h-[21px] shrink-0 items-center px-[10px] pt-[2px] text-[11px] text-[#808080]">
          <span className="mr-1 h-[5px] w-[5px] rounded-full bg-[#008a00]" />
          27/06/2019 20:00:00| O:1407.64| H:1409.95| L:1406.25| C:1409.46| V:21406
          <span className="ml-auto">当前时间：</span>
          <span className="ml-[2px] text-[#ff4510]">09/07/2019 13:43:21</span>
          <button className="ml-2 flex items-center text-[#ff4510]">UTC+3<Caret className="ml-2 text-[#c8c8c8]" /></button>
          <span className="ml-[9px] mr-1 text-[#3d5a78]">|</span>
          <span>50 ms / 170 ms</span>
        </footer>
      </div>
    </div>
    <div className="flex h-[2px] shrink-0 bg-black"><span className="ml-12 h-px w-[344px] bg-[#f0f0f0]" /></div>

    {/* edge of the docked window behind */}
    <div className="absolute right-0 top-[111px] h-[74px] w-[7px] bg-white"><div className="h-[30px] bg-[#1a78d6]" /></div>
  </div>
);

export default App;
